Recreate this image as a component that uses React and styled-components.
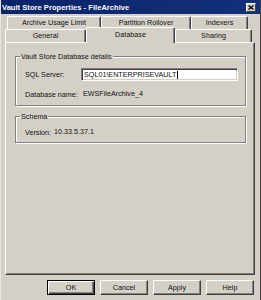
import React from 'react'
import styled, { createGlobalStyle } from 'styled-components'

const GlobalStyle = createGlobalStyle`
  html, body {
    margin: 0;
    padding: 0;
    background: #d4d0c8;
  }
  body {
    font-family: "Liberation Sans", Arial, sans-serif;
    font-size: 7.2px;
    color: #111;
  }
`

const topTabs = [
  { label: 'Archive Usage Limit', w: 94 },
  { label: 'Partition Rollover', w: 90 },
  { label: 'Indexers', w: 57 },
]

const bottomTabs = [
  { label: 'General', w: 81 },
  { label: 'Database', w: 89, active: true },
  { label: 'Sharing', w: 77 },
]

const buttons = ['OK', 'Cancel', 'Apply', 'Help']

export default function App() {
  return (
    <>
      <GlobalStyle />
      <Window>
        <TitleBar>
          <Title>Vault Store Properties - FileArchive</Title>
          <CloseButton>
            <svg width="6" height="5" viewBox="0 0 6 5">
              <path d="M0.5 0.5 L5.5 4.5 M5.5 0.5 L0.5 4.5" stroke="#000" strokeWidth="1.3" />
            </svg>
          </CloseButton>
        </TitleBar>

        <Body>
          <Tabs>
            <TabRow $indent={2} $h={10}>
              {topTabs.map(t => (
                <Tab key={t.label} $w={t.w}>{t.label}</Tab>
              ))}
            </TabRow>
            <TabRow $h={13}>
              {bottomTabs.map(t => (
                <Tab key={t.label} $w={t.w} $active={t.active}>{t.label}</Tab>
              ))}
            </TabRow>
          </Tabs>

          <Page>
            <GroupBox $pb={6}>
              <Legend>Vault Store Database details</Legend>
              <FieldRow $mt={7}>
                <Label $w={56}>SQL Server:</Label>
                <TextInput>
                  SQL01\ENTERPRISEVAULT<Caret />
                </TextInput>
              </FieldRow>
              <FieldRow $mt={8}>
                <Label $w={56}>Database name:</Label>
                <Value>EWSFileArchive_4</Value>
              </FieldRow>
            </GroupBox>

            <GroupBox $pb={5} $mt={10}>
              <Legend>Schema</Legend>
              <FieldRow $mt={6}>
                <Label $w={27}>Version:</Label>
                <Value>10.33.5.37.1</Value>
              </FieldRow>
            </GroupBox>
          </Page>

          <ButtonRow>
            {buttons.map(b => (
              <Button key={b} $default={b === 'OK'}>{b}</Button>
            ))}
          </ButtonRow>
        </Body>
      </Window>
    </>
  )
}

const Window = styled.div`
  width: 261px;
  height: 300px;
  box-sizing: border-box;
  display: flex;
  flex-direction: column;
  background: #d4d0c8;
  border-left: 1px solid #e8e6e2;
  border-right: 1px solid #404040;
  overflow: hidden;
`

const TitleBar = styled.div`
  height: 14px;
  flex: none;
  display: flex;
  align-items: center;
  justify-content: space-between;
  padding: 0 4px 0 1px;
  background: linear-gradient(90deg, #0a246a 0%, #12307a 100%);
`

const Title = styled.div`
  color: #fff;
  font-weight: bold;
  font-size: 7.5px;
  letter-spacing: 0.05px;
`

const CloseButton = styled.div`
  width: 10px;
  height: 9px;
  box-sizing: border-box;
  display: flex;
  align-items: center;
  justify-content: center;
  background: #d4d0c8;
  border: 1px solid;
  border-color: #fff #404040 #404040 #fff;
`

const Body = styled.div`
  flex: 1;
  display: flex;
  flex-direction: column;
  padding: 5px 5px 5px 4px;
  min-height: 0;
`

const Tabs = styled.div`
  display: flex;
  flex-direction: column;
  flex: none;
`

const TabRow = styled.div`
  display: flex;
  align-items: flex-end;
  height: ${p => p.$h}px;
  padding-left: ${p => p.$indent || 0}px;
`

const Tab = styled.div`
  width: ${p => p.$w}px;
  height: ${p => (p.$active ? 16 : 13)}px;
  box-sizing: border-box;
  flex: none;
  display: flex;
  align-items: center;
  justify-content: center;
  padding-bottom: ${p => (p.$active ? 2 : 1)}px;
  background: #d4d0c8;
  border-top: 1px solid #fff;
  border-left: 1px solid #fff;
  border-right: 1px solid #404040;
  box-shadow: inset -1px 0 0 #808080;
  border-radius: 2px 2px 0 0;
  white-space: nowrap;
  position: relative;
  z-index: ${p => (p.$active ? 2 : 0)};
  margin-bottom: ${p => (p.$active ? -1 : 0)}px;
`

const Page = styled.div`
  flex: 1;
  display: flex;
  flex-direction: column;
  padding: 13px 8px 0 9px;
  border: 1px solid;
  border-color: #fff #404040 #404040 #fff;
  box-shadow: inset -1px -1px 0 #808080;
  position: relative;
  z-index: 1;
`

const GroupBox = styled.div`
  border: 1px solid #808080;
  box-shadow: inset 1px 1px 0 #fff, 1px 1px 0 #fff;
  padding-bottom: ${p => p.$pb}px;
  margin-top: ${p => p.$mt || 0}px;
`

const Legend = styled.div`
  width: fit-content;
  margin: -5px 0 0 4px;
  padding: 0 1px;
  height: 9px;
  line-height: 9px;
  background: #d4d0c8;
`

const FieldRow = styled.div`
  display: flex;
  align-items: center;
  padding-left: 9px;
  margin-top: ${p => p.$mt}px;
  white-space: nowrap;
`

const Label = styled.div`
  width: ${p => p.$w}px;
  flex: none;
`

const Value = styled.div`
  padding-left: 2px;
  line-height: 10px;
`

const TextInput = styled.div`
  width: 157px;
  height: 13px;
  box-sizing: border-box;
  display: flex;
  align-items: center;
  padding-left: 2px;
  background: #fff;
  border: 1px solid;
  border-color: #808080 #fff #fff #808080;
  box-shadow: inset 1px 1px 0 #404040, inset -1px -1px 0 #d4d0c8;
`

const Caret = styled.span`
  display: inline-block;
  width: 1px;
  height: 8px;
  margin-left: 1px;
  background: #000;
`

const ButtonRow = styled.div`
  flex: none;
  display: flex;
  justify-content: flex-end;
  gap: 5px;
  margin-top: 5px;
  padding-right: 1px;
`

const Button = styled.div`
  width: 48px;
  height: 15px;
  box-sizing: border-box;
  display: flex;
  align-items: center;
  justify-content: center;
  background: #d4d0c8;
  border: 1px solid;
  border-color: ${p => (p.$default ? '#000' : '#fff #404040 #404040 #fff')};
  box-shadow: ${p =>
    p.$default
      ? 'inset 1px 1px 0 #fff, inset -1px -1px 0 #404040, inset -2px -2px 0 #808080'
      : 'inset -1px -1px 0 #808080'};
`
